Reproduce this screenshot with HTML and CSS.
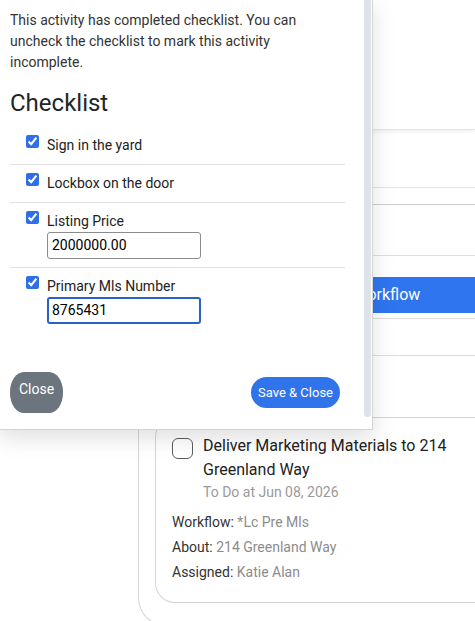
FILE: index.html
```html
<!DOCTYPE html>
<html lang="en">
<head>
    <meta charset="UTF-8">
    <meta name="viewport" content="width=device-width, initial-scale=1.0">
    <title>Activity Checklist</title>
    <link rel="stylesheet" href="styles.css">
</head>
<body>
    <!-- Activity panel (behind the modal) -->
    <div class="page">
        <div class="panel">
            <div class="panel-head"></div>
            <div class="row row-a"></div>
            <div class="row row-b"></div>
            <div class="row row-c"></div>
            <div class="row row-action">
                <a href="#" class="workflow-btn">Start Workflow</a>
            </div>
            <div class="row row-d"></div>
            <div class="row-gap"></div>

            <div class="activity-card">
                <div class="activity-top">
                    <span class="round-check"></span>
                    <div>
                        <div class="activity-title">Deliver Marketing Materials to 214 Greenland Way</div>
                        <div class="activity-date">To Do at Jun 08, 2026</div>
                    </div>
                </div>
                <div class="meta first"><span class="meta-label">Workflow:</span> *Lc Pre Mls</div>
                <div class="meta"><span class="meta-label">About:</span> 214 Greenland Way</div>
                <div class="meta"><span class="meta-label">Assigned:</span> Katie Alan</div>
            </div>
        </div>
    </div>

    <!-- Checklist modal -->
    <div class="modal">
        <div class="modal-body">
            <p class="modal-note">This activity has completed checklist. You can uncheck the checklist to mark this activity incomplete.</p>
            <h2>Checklist</h2>
            <ul class="checklist">
                <li>
                    <label><input type="checkbox" checked><span>Sign in the yard</span></label>
                </li>
                <li>
                    <label><input type="checkbox" checked><span>Lockbox on the door</span></label>
                </li>
                <li class="has-field">
                    <label><input type="checkbox" checked><span>Listing Price</span></label>
                    <input type="text" class="field" value="2000000.00">
                </li>
                <li class="has-field">
                    <label><input type="checkbox" checked><span>Primary Mls Number</span></label>
                    <input type="text" class="field focused" value="8765431">
                </li>
            </ul>
            <div class="modal-actions">
                <button class="btn-close">Close</button>
                <button class="btn-save">Save &amp; Close</button>
            </div>
        </div>
        <div class="scrollbar"></div>
    </div>
</body>
</html>
```

FILE: styles.css
```css
* {
    margin: 0;
    padding: 0;
    box-sizing: border-box;
    font-family: Roboto, "Liberation Sans", Arial, sans-serif;
}

body {
    background-color: #fff;
    color: #222;
    overflow: hidden;
    height: 100vh;
    position: relative;
}

/* Activity panel */
.page {
    padding-left: 138px;
}

.panel {
    border-left: 1px solid #d6d6d6;
    border-bottom: 1px solid #d6d6d6;
    border-bottom-left-radius: 28px;
    padding: 0 0 22px 16px;
}

.panel-head {
    height: 130px;
    border-bottom: 1px solid #e4e4e4;
    box-shadow: 0 2px 4px rgba(0, 0, 0, 0.06);
}

.row {
    border-bottom: 1px solid #dedede;
}

.row-a {
    height: 58px;
    border-bottom-color: #e2e2e2;
}

.row-b {
    height: 17px;
    border-bottom-color: #cdcdcd;
}

.row-c {
    height: 51px;
}

.row-action {
    height: 63px;
    padding-top: 21px;
}

.row-d {
    height: 37px;
}

.row-gap {
    height: 61px;
}

.workflow-btn {
    display: block;
    height: 36px;
    line-height: 36px;
    padding-left: 160px;
    background-color: #3075f0;
    color: white;
    font-size: 16px;
    white-space: nowrap;
    overflow: hidden;
    text-decoration: none;
}

/* Activity card */
.activity-card {
    border: 1px solid #d5d5d5;
    border-right: none;
    border-radius: 20px 0 0 20px;
    padding: 16px 16px 17px 16px;
}

.activity-top {
    display: flex;
    gap: 10px;
}

.round-check {
    width: 21px;
    height: 21px;
    margin-top: 4px;
    border: 1px solid #5c5c5c;
    border-radius: 6px;
    flex-shrink: 0;
}

.activity-title {
    max-width: 270px;
    font-size: 16px;
    line-height: 24px;
    color: #222;
}

.activity-date {
    font-size: 14px;
    line-height: 20px;
    color: #9a9a9a;
}

.meta {
    font-size: 14px;
    line-height: 25px;
    color: #8c8c8c;
}

.meta.first {
    margin-top: 8px;
}

.meta-label {
    color: #333;
}

/* Modal */
.modal {
    position: absolute;
    top: -1px;
    left: -1px;
    width: 374px;
    height: 431px;
    background-color: white;
    border: 1px solid #d4d4d4;
    box-shadow: 0 8px 22px rgba(0, 0, 0, 0.13);
}

.modal-body {
    padding: 10px 27px 0 10px;
}

.modal-note {
    font-size: 14px;
    line-height: 21px;
    color: #333;
}

.modal-body h2 {
    margin-top: 16px;
    font-size: 24px;
    font-weight: 400;
    line-height: 1.2;
    color: #212529;
}

.checklist {
    list-style: none;
    margin-top: 9px;
}

.checklist li {
    padding: 8px 0 9px 16px;
    border-bottom: 1px solid #dee2e6;
}

.checklist li.has-field {
    padding-bottom: 8px;
}

.checklist li:last-child {
    border-bottom: none;
    padding-bottom: 9px;
}

.checklist label {
    display: flex;
    align-items: flex-start;
    gap: 8px;
    font-size: 14px;
    line-height: 20px;
    color: #222;
}

.checklist input[type="checkbox"] {
    width: 13px;
    height: 13px;
    margin: 0;
    accent-color: #2f6fe6;
    flex-shrink: 0;
}

.field {
    display: block;
    width: 154px;
    height: 27px;
    margin: 1px 0 0 21px;
    padding: 0 4px;
    border: 1px solid #8c8c8c;
    border-radius: 3px;
    font-size: 14px;
    color: #000;
    outline: none;
}

.field.focused {
    border: 2px solid #2b60c6;
    padding: 0 3px;
}

.modal-actions {
    display: flex;
    justify-content: space-between;
    align-items: center;
    margin-top: 39px;
    padding-right: 5px;
}

.btn-close {
    background-color: #6c757d;
    color: white;
    border: none;
    border-radius: 14px / 20px;
    padding: 7px 9px 14px;
    font-size: 14px;
    line-height: 20px;
    cursor: pointer;
}

.btn-save {
    background-color: #2f74eb;
    color: white;
    border: none;
    border-radius: 16px;
    height: 31px;
    padding: 0 7px;
    font-size: 13px;
    line-height: 31px;
    cursor: pointer;
}

.scrollbar {
    position: absolute;
    top: 0;
    right: 1px;
    width: 7px;
    height: 417px;
    background-color: #dfe2e6;
    border-radius: 0 0 4px 4px;
}
```
